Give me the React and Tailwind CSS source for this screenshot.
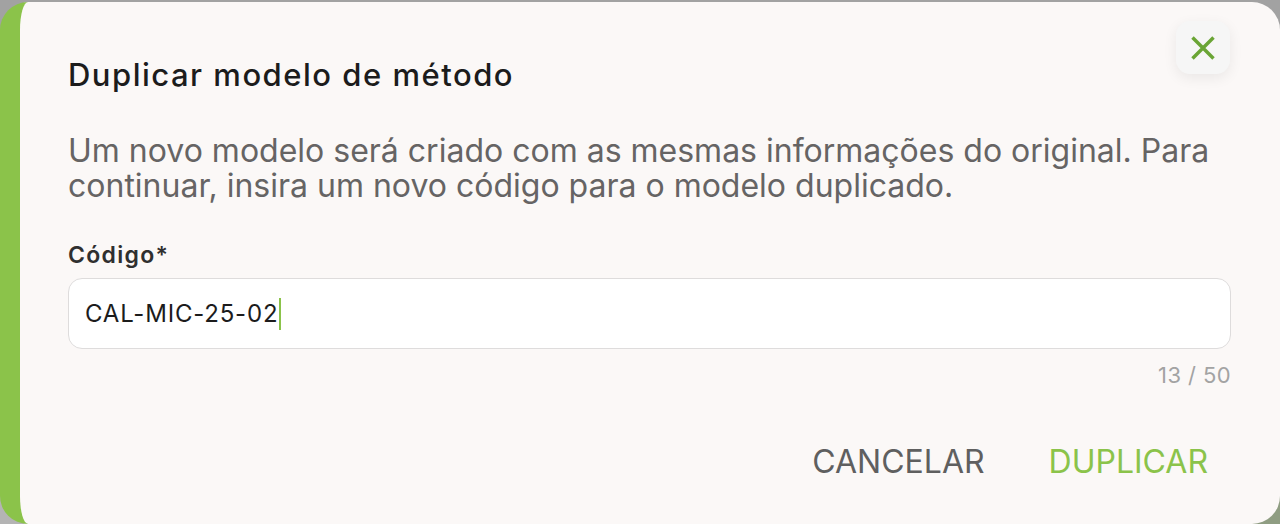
const CloseIcon = () => (
    <svg viewBox="0 0 24 24" className="w-[36px] h-[36px]" fill="none" stroke="currentColor" strokeWidth={2.3} strokeLinecap="butt">
        <path d="M5 5L19 19M19 5L5 19" />
    </svg>
);

const App = () => {
    return (
        <div className="relative w-[1280px] h-[524px] overflow-hidden bg-[#a2a2a2] font-['Inter',sans-serif]">
            {/* fondo detras del dialogo */}
            <div className="absolute right-0 bottom-0 w-[60px] h-[60px] bg-[#8f9d82]"></div>
            <div className="absolute left-0 bottom-0 w-[30px] h-[30px] bg-[#b4b4b4]"></div>

            <div className="absolute left-0 top-[2px] w-[1280px] h-[522px] rounded-[28px] border-l-[20px] border-[#8bc34a] bg-[#fbf8f7] pl-[48px] pr-[49px] pt-[53px] flex flex-col">
                <button className="absolute top-[19px] right-[50px] w-[54px] h-[53px] rounded-[14px] bg-[#f6f6f6] shadow-[0_4px_14px_rgba(0,0,0,0.07)] flex items-center justify-center text-[#6aa535]">
                    <CloseIcon />
                </button>

                <h2 className="text-[31px] leading-[40px] font-medium text-[#1c1c1c] tracking-[1.5px]">Duplicar modelo de método</h2>

                <p className="mt-[38px] text-[32px] leading-[35px] text-[#666464]">
                    Um novo modelo será criado com as mesmas informações do original. Para continuar, insira um novo código para o modelo duplicado.
                </p>

                <label className="mt-[38px] text-[23px] leading-[28px] font-semibold text-[#2f2f2f] tracking-[1.3px]">Código*</label>
                <div className="mt-[9px] h-[71px] rounded-[14px] border-[1.5px] border-[#dedcdc] bg-white flex items-center px-[16px]">
                    <span className="text-[24px] text-[#1c1c1c] tracking-[0.8px]">CAL-MIC-25-02</span>
                    <span className="ml-[1px] w-[2px] h-[32px] bg-[#8bc34a]"></span>
                </div>
                <div className="mt-[14px] text-right text-[22px] leading-[24px] text-[#a3a3a3] tracking-[0.4px]">13 / 50</div>

                <div className="mt-[55px] flex justify-end items-center gap-[64px] pr-[23px]">
                    <button className="text-[32px] leading-[40px] text-[#5f5f5f]">CANCELAR</button>
                    <button className="text-[32px] leading-[40px] text-[#8bc34a]">DUPLICAR</button>
                </div>
            </div>
        </div>
    );
};

export default App;
